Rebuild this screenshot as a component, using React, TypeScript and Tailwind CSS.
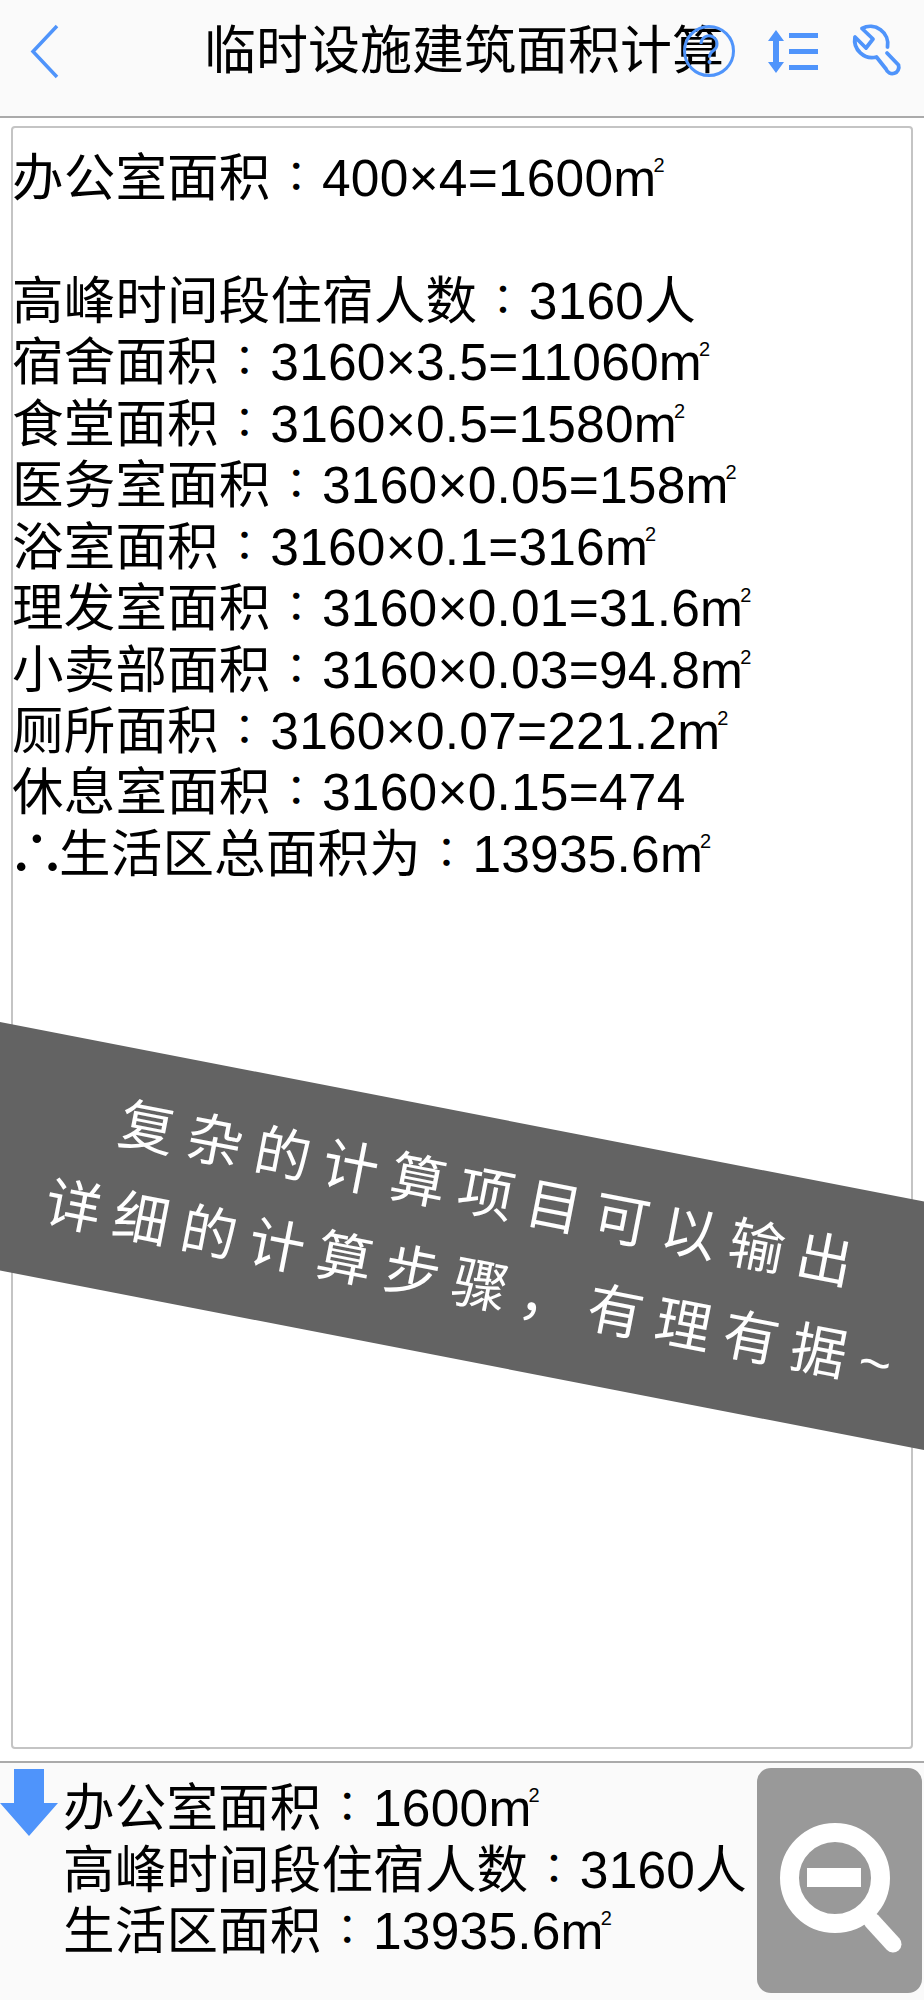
const font = { fontFamily: '"Liberation Sans","Noto Sans CJK SC",sans-serif' };
const tc = { fontFamily: '"Noto Sans CJK TC",sans-serif' };

function M2() {
  return (
    <>
      m<span className="text-[20px] leading-[0] align-[24px] -ml-[3px]">2</span>
    </>
  );
}

const lines: (string | null)[] = [
  "办公室面积：400×4=1600|",
  null,
  "高峰时间段住宿人数：3160人",
  "宿舍面积：3160×3.5=11060|",
  "食堂面积：3160×0.5=1580|",
  "医务室面积：3160×0.05=158|",
  "浴室面积：3160×0.1=316|",
  "理发室面积：3160×0.01=31.6|",
  "小卖部面积：3160×0.03=94.8|",
  "厕所面积：3160×0.07=221.2|",
  "休息室面积：3160×0.15=474",
  "生活区总面积为：13935.6|",
];

function Text({ text }: { text: string }) {
  const hasUnit = text.endsWith("|");
  const body = hasUnit ? text.slice(0, -1) : text;
  const [a, b] = body.split("：");
  return (
    <>
      {a}
      <span className="inline-block w-[51.5px] indent-0 text-center text-[42px] leading-[0] align-[4px]" style={tc}>：</span>
      {b}
      {hasUnit && <M2 />}
    </>
  );
}

function HeaderIcons() {
  return (
    <div className="absolute left-[680px] top-[15px] flex items-center">
      <svg width="60" height="70" viewBox="0 0 60 70" fill="none" stroke="#4f94fb">
        <circle cx="29" cy="36" r="24.5" strokeWidth="3" />
        <path d="M21 29 a8 8 0 1 1 12.500 6.500 c-3 2-4 3.500-4 7" strokeWidth="3" />
        <circle cx="29.500" cy="47" r="2" fill="#4f94fb" stroke="none" />
      </svg>
      <svg width="60" height="70" viewBox="0 0 60 70" className="ml-[23px]">
        <path d="M13 15 L21 26 H16 V47 H21 L13 58 L5 47 H10 V26 H5 Z" fill="#4f94fb" />
        <rect x="26" y="18" width="29" height="5" fill="#4f94fb" />
        <rect x="26" y="34" width="29" height="5" fill="#4f94fb" />
        <rect x="26" y="50" width="29" height="5" fill="#4f94fb" />
      </svg>
      <svg width="75" height="70" viewBox="0 0 75 70" className="ml-[17px]" fill="none" stroke="#4f94fb" strokeWidth="3.800" strokeLinecap="round" strokeLinejoin="round">
        <path d="M47.500 32 A17.500 17.500 0 0 0 22 13.500 L33 24 L26 33 L15 22 A17.500 17.500 0 0 0 36.500 42 L46 54 A5.500 5.500 0 0 0 58.500 50 L47 38" />
      </svg>
    </div>
  );
}

export default function App() {
  return (
    <div className="relative w-[924px] h-[2000px] overflow-hidden bg-white flex flex-col text-black" style={font}>
      <header className="relative h-[118px] shrink-0 bg-[#fafafa] border-b-2 border-[#aaaaaa]">
        <svg width="40" height="70" viewBox="0 0 40 70" className="absolute left-[25px] top-[17px]" fill="none" stroke="#4f94fb" strokeWidth="3.500">
          <path d="M32 9 L8 34.500 L32 60" />
        </svg>
        <div className="pl-[204px] pt-[21px] text-[52px] leading-[61px] whitespace-nowrap">临时设施建筑面积计算</div>
        <HeaderIcons />
      </header>

      <main className="flex-1 flex flex-col px-[11px] pt-[8px] pb-[12px] bg-white">
        <div className="flex-1 border-2 border-[#c4c4c4] rounded-[4px] pt-[20px] -indent-[1px] text-[51.5px] leading-[61.45px] tracking-[0.2px]">
          {lines.map((l, i) =>
            l === null ? (
              <div key={i} className="h-[61.45px]" />
            ) : (
              <div key={i} className="h-[61.45px] whitespace-nowrap">
                {i === 11 && <span className="inline-block w-[47px] text-center scale-[1.15]">∴</span>}
                <Text text={l} />
              </div>
            )
          )}
        </div>
      </main>

      <footer className="relative h-[239px] shrink-0 bg-[#fafafa] border-t-2 border-[#aaaaaa] flex">
        <svg width="58" height="68" viewBox="0 0 58 68" className="absolute left-0 top-[6px]">
          <path d="M14 0 H44 V34 H58 L29 67 L0 34 H14 Z" fill="#4f94fb" />
        </svg>
        <div className="pl-[63px] pt-[15px] flex-1 text-[51.5px] leading-[61.6px] tracking-[0.2px]">
          <div className="whitespace-nowrap"><Text text="办公室面积：1600|" /></div>
          <div className="whitespace-nowrap"><Text text="高峰时间段住宿人数：3160人" /></div>
          <div className="whitespace-nowrap"><Text text="生活区面积：13935.6|" /></div>
        </div>
        <div className="w-[165px] h-[225px] mt-[5px] mr-[2px] bg-[#999999] rounded-[14px] flex items-center justify-center">
          <svg width="165" height="225" viewBox="0 0 165 225">
            <circle cx="78" cy="110" r="45.500" fill="none" stroke="#ffffff" strokeWidth="19" />
            <rect x="50" y="100" width="54" height="19" fill="#ffffff" />
            <path d="M115 153 L136 176" stroke="#ffffff" strokeWidth="17" strokeLinecap="round" />
          </svg>
        </div>
      </footer>

      <div className="absolute left-[-38px] top-[1114px] w-[1000px] h-[244px] rotate-[11deg] bg-[#636363] flex flex-col items-center justify-center pl-[44px] text-white text-[56px] leading-[91px] font-normal tracking-[13px] whitespace-nowrap">
        <div>复杂的计算项目可以输出</div>
        <div>详细的计算步骤，有理有据~</div>
      </div>
    </div>
  );
}
